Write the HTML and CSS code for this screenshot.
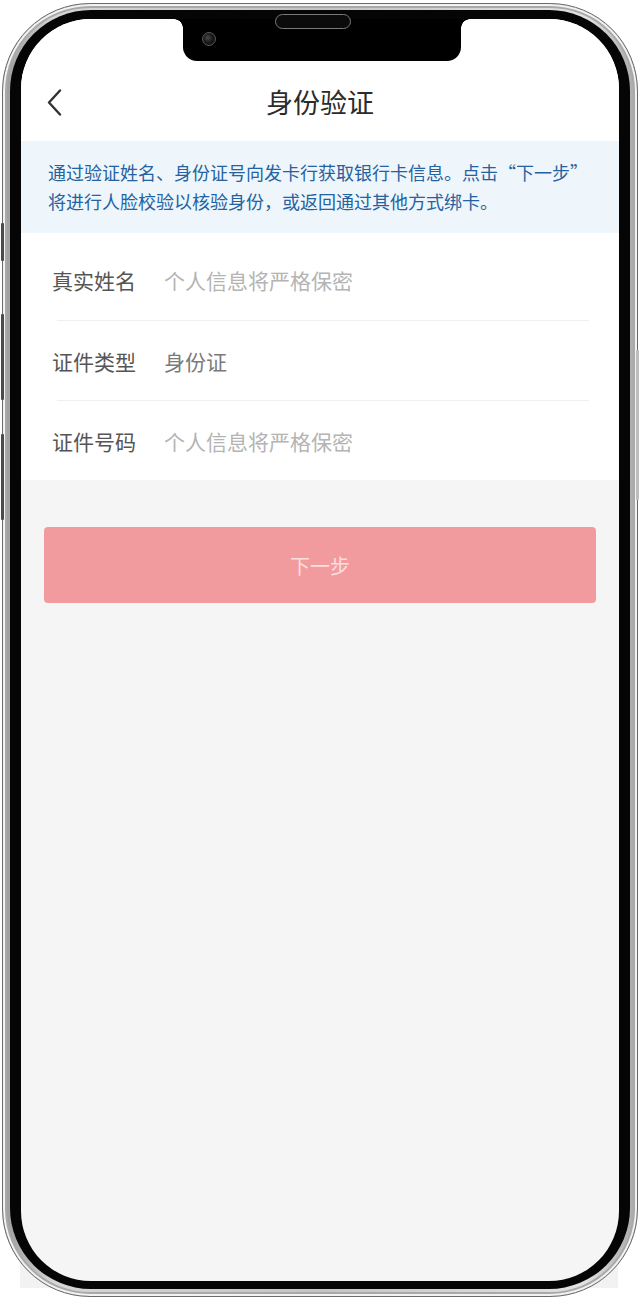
FILE: index.html
```html
<!DOCTYPE html>
<html lang="zh-CN">
<head>
<meta charset="utf-8">
<title>身份验证</title>
<link rel="stylesheet" href="styles.css">
</head>
<body>
<div class="backdrop"></div>
<div class="device">
  <span class="side-btn btn-mute"></span>
  <span class="side-btn btn-vol-up"></span>
  <span class="side-btn btn-vol-down"></span>
  <span class="side-btn btn-power"></span>
  <div class="bezel">
    <div class="screen">
      <div class="notch"></div>
      <header class="navbar">
        <span class="back">
          <svg width="15" height="27" viewBox="0 0 15 27" aria-hidden="true">
            <path d="M13 1.5 L2 13.5 L13 25.5" fill="none" stroke="#333" stroke-width="2.4" stroke-linecap="round" stroke-linejoin="round"/>
          </svg>
        </span>
        <h1 class="title">身份验证</h1>
        <span class="nav-spacer"></span>
      </header>
      <p class="notice">通过验证姓名、身份证号向发卡行获取银行卡信息。点击“下一步”将进行人脸校验以核验身份，或返回通过其他方式绑卡。</p>
      <div class="form">
        <div class="row">
          <span class="label">真实姓名</span>
          <span class="placeholder">个人信息将严格保密</span>
        </div>
        <div class="row">
          <span class="label">证件类型</span>
          <span class="value">身份证</span>
        </div>
        <div class="row">
          <span class="label">证件号码</span>
          <span class="placeholder">个人信息将严格保密</span>
        </div>
      </div>
      <div class="actions">
        <button class="next" type="button">下一步</button>
      </div>
    </div>
  </div>
  <span class="speaker"></span>
  <span class="camera"></span>
</div>
</body>
</html>
```

FILE: styles.css
```css
* { box-sizing: border-box; }

html, body {
  margin: 0;
  padding: 0;
}

body {
  width: 640px;
  height: 1301px;
  background: #ffffff;
  position: relative;
  overflow: hidden;
  font-family: "Noto Sans CJK SC", "Noto Sans", sans-serif;
}

.backdrop {
  position: absolute;
  left: 20px;
  top: 1100px;
  width: 598px;
  height: 188px;
  background: #f2f2f2;
}

.device {
  position: relative;
  z-index: 1;
  width: 636px;
  height: 1294px;
  margin: 3px 0 0 2px;
  padding: 6px 7px 7px;
  border-radius: 88px;
  border: 1px solid #6a6a6a;
  background: linear-gradient(90deg, #9a9a9a 0%, #d6d6d6 8%, #c4c4c4 50%, #e2e2e2 92%, #a8a8a8 100%);
  box-shadow: inset 0 0 0 2px #f2f2f2, inset 0 0 0 4px #a9a9a9;
}

.side-btn {
  position: absolute;
  left: -2px;
  width: 3px;
  background: #4a4a4a;
  border-radius: 1px;
}
.btn-mute { top: 219px; height: 38px; }
.btn-vol-up { top: 310px; height: 86px; }
.btn-vol-down { top: 430px; height: 86px; }
.btn-power {
  left: auto;
  right: -2px;
  top: 346px;
  height: 150px;
  background: #bdbdbd;
}

.bezel {
  height: 100%;
  padding: 9px 11px 8px;
  border-radius: 81px;
  background: #050505;
}

.screen {
  position: relative;
  height: 100%;
  display: flex;
  flex-direction: column;
  border-radius: 70px;
  overflow: hidden;
  background: #f5f5f5;
}

.notch {
  position: absolute;
  top: 0;
  left: 162px;
  width: 278px;
  height: 42px;
  background: #000;
  border-radius: 0 0 14px 14px;
  z-index: 2;
}
.notch::before,
.notch::after {
  content: "";
  position: absolute;
  top: 0;
  width: 9px;
  height: 9px;
}
.notch::before {
  left: -9px;
  background: radial-gradient(circle at 0 100%, transparent 8.5px, #000 9px);
}
.notch::after {
  right: -9px;
  background: radial-gradient(circle at 100% 100%, transparent 8.5px, #000 9px);
}

.speaker {
  position: absolute;
  z-index: 3;
  left: 272px;
  top: 10px;
  width: 76px;
  height: 15px;
  border-radius: 8px;
  border: 1.5px solid #7a7a7a;
  background: #0b0b0b;
}

.camera {
  position: absolute;
  z-index: 3;
  left: 199px;
  top: 28px;
  width: 14px;
  height: 14px;
  border-radius: 50%;
  border: 1.5px solid #5a5a5a;
  background: radial-gradient(circle at 40% 40%, #4a4a4a 0, #1a1a1a 45%, #0a0a0a 100%);
}

.navbar {
  height: 122px;
  padding-top: 58px;
  background: #ffffff;
  display: grid;
  grid-template-columns: 1fr auto 1fr;
  align-items: start;
}

.back {
  height: 50px;
  padding-left: 26px;
  display: flex;
  align-items: center;
}

.title {
  margin: 0;
  height: 50px;
  line-height: 50px;
  font-size: 27px;
  font-weight: 400;
  color: #2b2b2b;
}

.notice {
  margin: 0;
  padding: 17px 20px 17px 27px;
  background: #eef6fc;
  color: #2562a0;
  font-size: 18px;
  line-height: 29px;
}

.form {
  background: #ffffff;
  padding-top: 7px;
}

.row {
  height: 80px;
  margin: 0 30px 0 36px;
  display: flex;
  align-items: center;
  font-size: 21px;
}
.row + .row {
  border-top: 1px solid #efefef;
}

.label {
  width: 112px;
  margin-left: -5px;
  color: #555555;
}

.placeholder {
  color: #b4b4b4;
}

.value {
  color: #7a7a7a;
}

.actions {
  padding: 47px 23px 0 23px;
}

.next {
  display: block;
  width: 100%;
  height: 76px;
  border: 0;
  border-radius: 4px;
  background: #f29b9f;
  color: #fcdede;
  font-family: "Noto Sans CJK SC", "Noto Sans", sans-serif;
  font-size: 20px;
  padding: 0;
}
```
